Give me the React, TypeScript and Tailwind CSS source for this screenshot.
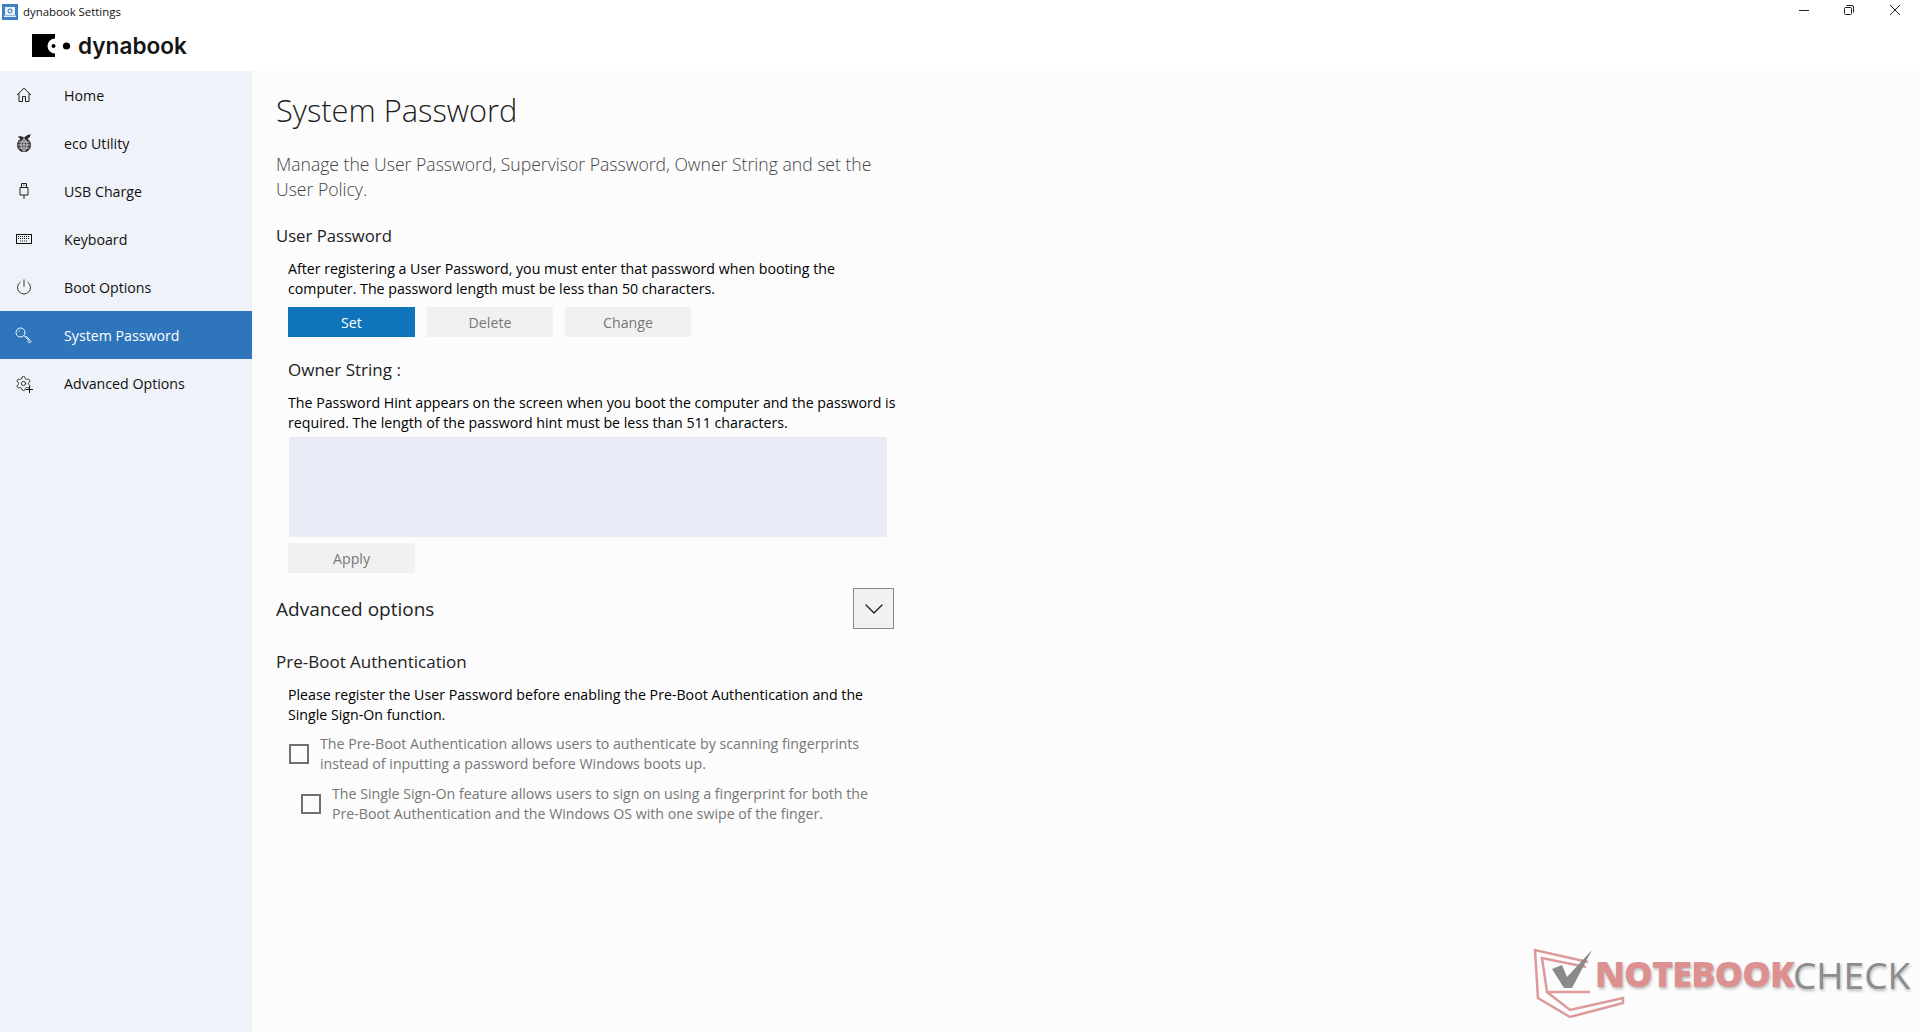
import React from 'react';
import { ChevronDown, Settings } from 'lucide-react';

const HomeIcon = () => (
  <svg width="16" height="16" viewBox="0 0 16 16" fill="none" stroke="#222" strokeWidth="1">
    <path d="M1 8 L8 1.2 L15 8 M3 6.5 V14.5 H6.5 V9.5 H9.5 V14.5 H13 V6.5" />
  </svg>
);

const EcoIcon = () => (
  <svg width="16" height="18" viewBox="0 0 16 18" fill="none" stroke="#222" strokeWidth="1.1">
    <path d="M8 5 C7 3 4.5 2.5 3 3 C4.5 4.5 6 5 8 5 C9 3 11 1.5 14 1 C13 3.5 11 5 8 5" fill="#222" />
    <circle cx="8" cy="11" r="6.5" fill="#444" />
    <path d="M1.5 11 H14.5 M2.5 8 H13.5 M2.5 14 H13.5 M8 4.5 V17.5 M8 4.5 C4 8 4 14 8 17.5 M8 4.5 C12 8 12 14 8 17.5" stroke="#eef1f7" strokeWidth="0.7" />
  </svg>
);

const UsbIcon = () => (
  <svg width="10" height="16" viewBox="0 0 10 16" fill="none" stroke="#222" strokeWidth="1">
    <path d="M2.5 4.5 V0.5 H7.5 V4.5 M1 4.5 H9 V12 H1 Z M5 12 V16" />
    <path d="M4 2 H4.8 M5.6 2 H6.4" />
  </svg>
);

const KeyboardIcon = () => (
  <svg width="16" height="10" viewBox="0 0 16 10" fill="none" stroke="#111" strokeWidth="1">
    <rect x="0.5" y="0.5" width="15" height="9" />
    <path d="M2 2.5 H14 M2 4.5 H14 M4 7 H12" strokeDasharray="1 1" />
  </svg>
);

const PowerIcon = () => (
  <svg width="16" height="16" viewBox="0 0 16 16" fill="none" stroke="#333" strokeWidth="1">
    <path d="M8 0.5 V7.5 M4.5 3 A6.5 6.5 0 1 0 11.5 3" />
  </svg>
);

const KeyIcon = () => (
  <svg width="17" height="17" viewBox="0 0 17 17" fill="none" stroke="#fff" strokeWidth="1">
    <circle cx="5.5" cy="5.5" r="4.5" />
    <path d="M8.8 8.5 L14 13.5 L13 14.5 L14.5 16 L16 14.5 L11 9 M3.5 4 H4.5" />
  </svg>
);

const GearIcon = () => (
  <div className="relative h-[17px] w-[17px]">
    <Settings size={17} strokeWidth={1.2} color="#111" />
    <svg width="7" height="7" viewBox="0 0 7 7" className="absolute -bottom-[1px] -right-[1px]" fill="none" stroke="#111" strokeWidth="1">
      <path d="M3.5 0 V7 M0 3.5 H7" />
    </svg>
  </div>
);

const MinimizeIcon = () => (
  <svg width="10" height="10" viewBox="0 0 10 10" fill="none" stroke="#222" strokeWidth="1">
    <path d="M0 5.5 H10" />
  </svg>
);

const RestoreIcon = () => (
  <svg width="10" height="10" viewBox="0 0 10 10" fill="none" stroke="#222" strokeWidth="1">
    <rect x="0.5" y="2.5" width="7" height="7" rx="1" />
    <path d="M2.5 0.5 H8 A1.5 1.5 0 0 1 9.5 2 V7.5" />
  </svg>
);

const CloseIcon = () => (
  <svg width="10" height="10" viewBox="0 0 10 10" fill="none" stroke="#222" strokeWidth="1">
    <path d="M0 0 L10 10 M10 0 L0 10" />
  </svg>
);

const navItems = [
  { label: 'Home', icon: <HomeIcon /> },
  { label: 'eco Utility', icon: <EcoIcon /> },
  { label: 'USB Charge', icon: <UsbIcon /> },
  { label: 'Keyboard', icon: <KeyboardIcon /> },
  { label: 'Boot Options', icon: <PowerIcon /> },
  { label: 'System Password', icon: <KeyIcon />, active: true },
  { label: 'Advanced Options', icon: <GearIcon /> },
];

const ActionButton = ({ label, primary, wide }: { label: string; primary?: boolean; wide?: boolean }) => (
  <div
    className={`flex h-[30px] items-center justify-center pt-[1px] text-[14.2px] ${
      primary ? 'bg-[#0f74bc] text-white' : 'bg-[#f1f1f1] text-[#777777]'
    } ${wide ? 'w-[127px]' : 'w-[126px]'}`}
  >
    {label}
  </div>
);

const CheckRow = ({ children, className }: { children: React.ReactNode; className: string }) => (
  <div className={`flex items-center text-[14.2px] leading-[20px] text-[#777777] ${className}`}>
    <div className="mr-[11px] h-5 w-5 border-2 border-[#6f6f6f]" />
    <div>{children}</div>
  </div>
);

export default function App() {
  return (
    <div className="flex h-[1032px] w-[1920px] flex-col overflow-hidden bg-white font-['Open_Sans',sans-serif] text-black">
      {/* Title bar and logo */}
      <div className="relative h-[71px] shrink-0 bg-white">
        <div className="flex h-[24px] items-center pl-[2px]">
          <svg width="16" height="16" viewBox="0 0 16 16" className="mr-[5px]">
            <rect width="16" height="16" fill="#3f7fc4" />
            <rect x="3" y="3" width="10" height="8" fill="#e8f0fa" />
            <circle cx="8" cy="7" r="2" fill="none" stroke="#2f6cae" strokeWidth="1" />
            <rect x="2" y="11.5" width="12" height="1.5" fill="#e8f0fa" />
          </svg>
          <span className="text-[11.4px] text-[#111]">dynabook Settings</span>
        </div>
        <div className="mt-[10px] flex h-[24px] items-center pl-[32px]">
          <svg width="42" height="24" viewBox="0 0 42 24">
            <path d="M0 0 H23 V4.5 A7.5 7.5 0 0 0 23 19.5 V23 H0 Z" fill="#000" />
            <circle cx="21.5" cy="12" r="2" fill="#000" />
            <circle cx="34.5" cy="12" r="3.6" fill="#000" />
          </svg>
          <span className="ml-[4px] font-['Inter',sans-serif] text-[22.6px] font-semibold text-[#151515]">dynabook</span>
        </div>
        <div className="absolute right-[2px] top-0 flex h-[20px] items-center">
          <div className="flex w-[45px] justify-center"><MinimizeIcon /></div>
          <div className="flex w-[46px] justify-center"><RestoreIcon /></div>
          <div className="flex w-[46px] justify-center"><CloseIcon /></div>
        </div>
      </div>

      <div className="flex flex-1">
        {/* Sidebar */}
        <nav className="w-[252px] shrink-0 bg-[#eff2f8]">
          {navItems.map((item) => (
            <div
              key={item.label}
              className={`flex h-12 items-center text-[14.2px] ${
                item.active ? 'bg-[#2f75bc] text-white' : 'text-[#111]'
              }`}
            >
              <div className="flex w-[48px] justify-center pr-[1px]">{item.icon}</div>
              <span className="ml-[16px] pt-[2px]">{item.label}</span>
            </div>
          ))}
        </nav>

        {/* Main content */}
        <main className="relative flex-1 bg-[#fcfcfc] pl-[24px]">
          <h1 className="mt-[16px] text-[30.8px] font-light leading-[46px] text-[#222]">System Password</h1>
          <p className="mt-[19px] text-[17.6px] font-light leading-[25px] text-[#444]">
            Manage the User Password, Supervisor Password, Owner String and set the
            <br />
            User Policy.
          </p>
          <h2 className="mt-[22px] text-[16.7px] leading-[24px] text-[#222]">User Password</h2>

          <div className="pl-[12px]">
            <p className="mt-[11px] text-[14.2px] leading-[20px]">
              After registering a User Password, you must enter that password when booting the
              <br />
              computer. The password length must be less than 50 characters.
            </p>
            <div className="mt-[8px] flex gap-[12px]">
              <ActionButton label="Set" primary wide />
              <ActionButton label="Delete" />
              <ActionButton label="Change" />
            </div>

            <h2 className="mt-[21px] text-[17px] leading-[24px] text-[#222]">Owner String :</h2>
            <p className="mt-[11px] text-[14.2px] leading-[20px]">
              The Password Hint appears on the screen when you boot the computer and the password is
              <br />
              required. The length of the password hint must be less than 511 characters.
            </p>
            <div className="ml-[1px] mt-[4px] h-[100px] w-[598px] bg-[#e8eaf6]" />
            <div className="mt-[6px]">
              <ActionButton label="Apply" wide />
            </div>
          </div>

          <div className="mt-[15px] flex h-[41px] w-[618px] items-center justify-between">
            <h2 className="text-[19px] leading-[28px] text-[#222]">Advanced options</h2>
            <div className="flex h-[41px] w-[41px] items-center justify-center border border-[#888] bg-[#f1f1f1]">
              <ChevronDown size={32} strokeWidth={1} color="#222" />
            </div>
          </div>

          <h2 className="mt-[21px] text-[17px] leading-[24px] text-[#222]">Pre-Boot Authentication</h2>
          <div className="pl-[12px]">
            <p className="mt-[11px] text-[14.2px] leading-[20px]">
              Please register the User Password before enabling the Pre-Boot Authentication and the
              <br />
              Single Sign-On function.
            </p>
            <CheckRow className="ml-[1px] mt-[9px]">
              The Pre-Boot Authentication allows users to authenticate by scanning fingerprints
              <br />
              instead of inputting a password before Windows boots up.
            </CheckRow>
            <CheckRow className="ml-[13px] mt-[10px]">
              The Single Sign-On feature allows users to sign on using a fingerprint for both the
              <br />
              Pre-Boot Authentication and the Windows OS with one swipe of the finger.
            </CheckRow>
          </div>

          {/* Watermark */}
          <div className="absolute bottom-[10px] right-[8px] h-[74px] w-[380px]">
            <svg width="110" height="74" viewBox="0 0 110 74" className="absolute left-0 top-0" fill="none">
              <path d="M56 14 L3 2 L6 50 L38 69 L91 55 L91 50 L38 62 L15 44 L10 10 L54 19 M15 44 L58 44" stroke="#dc9a9a" strokeWidth="2.5" />
              <path d="M20 21 L30 17 L35 29 L60 2 L40 40 L32 40 Z" fill="#8a8a8a" />
            </svg>
            <span className="absolute left-[63px] top-[8px] text-[36px] font-extrabold leading-none tracking-[-0.9px] text-[#dc9090] [text-shadow:1px_2px_3px_#bbbbbb]">
              NOTEBOOK
            </span>
            <span className="absolute left-[261px] top-[8px] text-[37px] font-normal leading-none text-[#8c8c8c] [text-shadow:1px_2px_3px_#bbbbbb]">
              CHECK
            </span>
          </div>
        </main>
      </div>
    </div>
  );
}
